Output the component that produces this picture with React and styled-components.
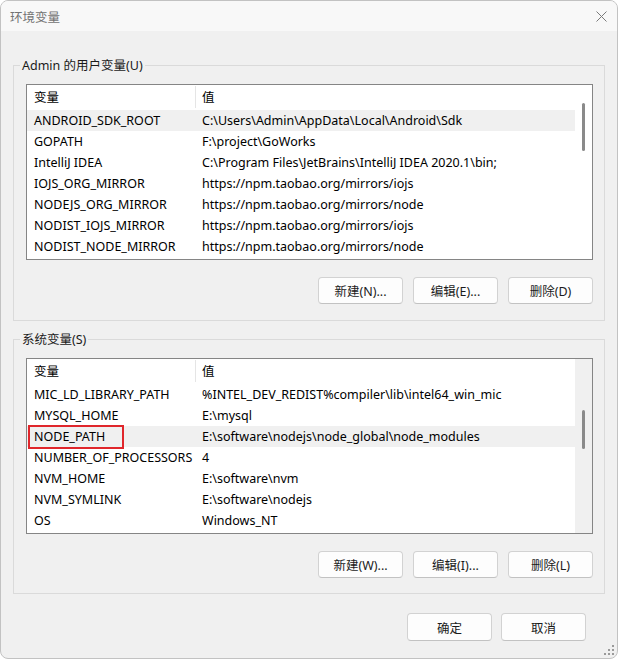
import React from 'react';
import styled, { createGlobalStyle } from 'styled-components';

const userVars = [
  ['ANDROID_SDK_ROOT', 'C:\\Users\\Admin\\AppData\\Local\\Android\\Sdk'],
  ['GOPATH', 'F:\\project\\GoWorks'],
  ['IntelliJ IDEA', 'C:\\Program Files\\JetBrains\\IntelliJ IDEA 2020.1\\bin;'],
  ['IOJS_ORG_MIRROR', 'https://npm.taobao.org/mirrors/iojs'],
  ['NODEJS_ORG_MIRROR', 'https://npm.taobao.org/mirrors/node'],
  ['NODIST_IOJS_MIRROR', 'https://npm.taobao.org/mirrors/iojs'],
  ['NODIST_NODE_MIRROR', 'https://npm.taobao.org/mirrors/node'],
];

const systemVars = [
  ['MIC_LD_LIBRARY_PATH', '%INTEL_DEV_REDIST%compiler\\lib\\intel64_win_mic'],
  ['MYSQL_HOME', 'E:\\mysql'],
  ['NODE_PATH', 'E:\\software\\nodejs\\node_global\\node_modules'],
  ['NUMBER_OF_PROCESSORS', '4'],
  ['NVM_HOME', 'E:\\software\\nvm'],
  ['NVM_SYMLINK', 'E:\\software\\nodejs'],
  ['OS', 'Windows_NT'],
];

export default function App() {
  return (
    <>
      <GlobalStyle />
      <Window>
        <TitleBar>
          <span>环境变量</span>
          <Close aria-label="关闭">
            <svg width="11" height="11" viewBox="0 0 11 11">
              <path d="M0.5 0.5 L10.5 10.5 M10.5 0.5 L0.5 10.5" stroke="#7a7a7a" strokeWidth="1" fill="none" />
            </svg>
          </Close>
        </TitleBar>
        <Body>
          <Group $top={26} $bottom={16}>
            <legend>Admin 的用户变量(U)</legend>
            <VarList rows={userVars} selected={0} track="#fff" thumbTop={18} thumbHeight={48} />
            <Buttons>
              <Button>新建(N)...</Button>
              <Button>编辑(E)...</Button>
              <Button>删除(D)</Button>
            </Buttons>
          </Group>
          <Group $top={10} $bottom={15}>
            <legend>系统变量(S)</legend>
            <VarList rows={systemVars} selected={2} marked={2} track="#f0f0f0" thumbTop={51} thumbHeight={39} />
            <Buttons>
              <Button>新建(W)...</Button>
              <Button>编辑(I)...</Button>
              <Button>删除(L)</Button>
            </Buttons>
          </Group>
          <Footer>
            <Button $tall>确定</Button>
            <Button $tall>取消</Button>
          </Footer>
        </Body>
        <Grip width="12" height="12" viewBox="0 0 12 12">
          {[[9, 1], [5, 5], [9, 5], [1, 9], [5, 9], [9, 9]].map(([x, y]) => (
            <rect key={`${x}-${y}`} x={x} y={y} width="2" height="2" fill="#9a9a9a" />
          ))}
        </Grip>
      </Window>
    </>
  );
}

function VarList({ rows, selected, marked, track, thumbTop, thumbHeight }) {
  return (
    <List>
      <Table>
        <Header>
          <Cell $first>变量</Cell>
          <Cell>值</Cell>
        </Header>
        {rows.map(([name, value], i) => (
          <Row key={name} $selected={i === selected}>
            <Cell $first $plain>
              {name}
              {i === marked && <Mark />}
            </Cell>
            <Cell>{value}</Cell>
          </Row>
        ))}
      </Table>
      <Scrollbar $track={track} $top={thumbTop}>
        <Thumb $h={thumbHeight} />
      </Scrollbar>
    </List>
  );
}

const GlobalStyle = createGlobalStyle`
  * { box-sizing: border-box; }
  html, body {
    margin: 0;
    padding: 0;
    background: #ffffff;
  }
  body {
    font-family: "Noto Sans", "Noto Sans CJK SC", sans-serif;
    font-size: 12.5px;
    color: #000;
  }
`;

const Window = styled.div`
  position: relative;
  width: 618px;
  height: 659px;
  border: 1px solid #c2c2c2;
  border-radius: 8px;
  background: #f0f0f0;
  display: flex;
  flex-direction: column;
  overflow: hidden;
`;

const TitleBar = styled.div`
  height: 30px;
  flex: none;
  display: flex;
  align-items: center;
  justify-content: space-between;
  padding: 0 10px 0 9px;
  background: #f8f8f8;
  color: #727272;
  font-size: 12.5px;
`;

const Close = styled.div`
  width: 11px;
  height: 11px;
  display: flex;
  margin-top: 1px;
`;

const Body = styled.div`
  flex: 1;
  display: flex;
  flex-direction: column;
  padding: 0 12px 0 12px;
`;

const Group = styled.fieldset`
  margin: ${p => p.$top}px 0 0;
  padding: 11px 11px ${p => p.$bottom}px 12px;
  border: 1px solid #dadada;
  min-width: 0;

  legend {
    margin-left: -6px;
    padding: 2px 2px 0;
    line-height: 14px;
    color: #1a1a1a;
  }
`;

const List = styled.div`
  height: 176px;
  border: 1px solid #858585;
  background: #fff;
  display: flex;
  overflow: hidden;
`;

const Table = styled.div`
  flex: 1;
  min-width: 0;
  display: flex;
  flex-direction: column;
`;

const Header = styled.div`
  height: 25px;
  flex: none;
  display: flex;
  align-items: stretch;
  line-height: 25px;
  & > div:first-child {
    border-right: 1px solid #e5e5e5;
    margin: 1px 0 2px;
    line-height: 23px;
  }
`;

const Row = styled.div`
  height: 21px;
  flex: none;
  display: flex;
  line-height: 22px;
  background: ${p => (p.$selected ? '#f0f0f0' : 'transparent')};
`;

const Cell = styled.div`
  position: relative;
  flex: ${p => (p.$first ? '0 0 169px' : '1')};
  min-width: 0;
  padding-left: ${p => (p.$first ? 7 : 6)}px;
  white-space: nowrap;
  overflow: ${p => (p.$plain ? 'visible' : 'hidden')};
`;

const Mark = styled.span`
  position: absolute;
  left: 1px;
  top: -1px;
  width: 96px;
  height: 24px;
  border: 2px solid #e0262b;
  pointer-events: none;
`;

const Scrollbar = styled.div`
  width: 17px;
  flex: none;
  background: ${p => p.$track};
  display: flex;
  justify-content: center;
  padding-top: ${p => p.$top}px;
`;

const Thumb = styled.div`
  width: 3px;
  height: ${p => p.$h}px;
  border-radius: 2px;
  background: #8a8a8a;
`;

const Buttons = styled.div`
  display: flex;
  justify-content: flex-end;
  gap: 10px;
  margin-top: 17px;
`;

const Footer = styled.div`
  display: flex;
  justify-content: flex-end;
  gap: 9px;
  margin: 19px 19px 0 0;
`;

const Button = styled.button`
  width: 85px;
  height: ${p => (p.$tall ? 28 : 27)}px;
  padding: 0;
  border: 1px solid #d2d2d2;
  border-bottom-color: #c2c2c2;
  border-radius: 4px;
  background: #fdfdfd;
  font-family: inherit;
  font-size: 12.5px;
  color: #1b1b1b;
`;

const Grip = styled.svg`
  position: absolute;
  right: 2px;
  bottom: 2px;
`;
